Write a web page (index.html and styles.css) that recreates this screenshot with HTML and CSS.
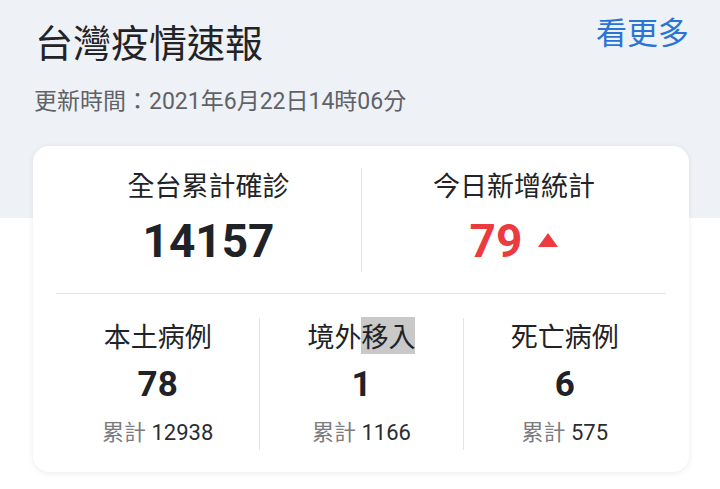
FILE: index.html
```html
<!DOCTYPE html>
<html lang="zh-Hant">
<head>
<meta charset="utf-8">
<title>台灣疫情速報</title>
<link rel="stylesheet" href="styles.css">
</head>
<body>
<div class="page">
  <header class="head">
    <h1 class="title cjk">台灣疫情速報</h1>
    <a class="more cjk" href="#">看更多</a>
  </header>
  <p class="updated">更新時間：2021年6月22日14時06分</p>
  <section class="card">
    <div class="top">
      <div class="cell">
        <div class="label cjk">全台累計確診</div>
        <div class="big">14157</div>
      </div>
      <div class="cell">
        <div class="label cjk">今日新增統計</div>
        <div class="big red">79<span class="tri"></span></div>
      </div>
    </div>
    <div class="rule"></div>
    <div class="bottom">
      <div class="col">
        <div class="label2 cjk">本土病例</div>
        <div class="mid">78</div>
        <div class="sum"><span class="sumlabel">累計</span> 12938</div>
      </div>
      <div class="col">
        <div class="label2 cjk">境外<span class="hl">移入</span></div>
        <div class="mid">1</div>
        <div class="sum"><span class="sumlabel">累計</span> 1166</div>
      </div>
      <div class="col">
        <div class="label2 cjk">死亡病例</div>
        <div class="mid">6</div>
        <div class="sum"><span class="sumlabel">累計</span> 575</div>
      </div>
    </div>
  </section>
</div>
</body>
</html>
```

FILE: styles.css
```css
html, body {
  margin: 0;
  padding: 0;
  background: #ffffff;
}
body {
  font-family: Roboto, "Noto Sans CJK TC", sans-serif;
  color: #202124;
}
.cjk {
  font-family: "Noto Sans CJK TC", sans-serif;
}
.page {
  width: 720px;
  height: 489px;
  overflow: hidden;
  background: linear-gradient(#eef1f5 0, #eef1f5 218px, #ffffff 218px);
}
.head {
  display: flex;
  justify-content: space-between;
  align-items: flex-start;
  padding: 15px 31px 0 35px;
}
.title {
  margin: 7px 0 0 0;
  font-size: 38px;
  line-height: 1;
  font-weight: 400;
  color: #222326;
}
.more {
  font-size: 31px;
  line-height: 1;
  color: #2a74d6;
  text-decoration: none;
}
.updated {
  margin: 30px 0 0 0;
  padding-left: 34px;
  font-size: 23px;
  line-height: 1;
  color: #5f6267;
}
.card {
  margin: 33px 31px 0 33px;
  background: #ffffff;
  border-radius: 16px;
  box-shadow: 0 1px 6px rgba(0, 0, 0, 0.08);
  padding: 22px 23px 22px;
}
.top {
  display: grid;
  grid-template-columns: 1fr 1fr;
}
.cell {
  display: flex;
  flex-direction: column;
  align-items: center;
  padding: 3px 0 8px;
}
.cell + .cell {
  border-left: 1px solid #e2e4e7;
}
.label {
  font-size: 27px;
  line-height: 1;
  color: #222326;
}
.big {
  margin-top: 20px;
  font-size: 46px;
  line-height: 1;
  font-weight: 700;
  color: #1f2227;
  display: flex;
  align-items: flex-end;
}
.red {
  color: #ec3a3e;
}
.tri {
  width: 0;
  height: 0;
  border-left: 10.5px solid transparent;
  border-right: 10.5px solid transparent;
  border-bottom: 14px solid #ec3a3e;
  margin: 0 0 17px 16px;
}
.rule {
  margin-top: 21px;
  height: 1px;
  background: #e2e4e7;
}
.bottom {
  margin-top: 24px;
  display: grid;
  grid-template-columns: 1fr 1fr 1fr;
}
.col {
  display: flex;
  flex-direction: column;
  align-items: center;
  padding-bottom: 6px;
}
.col + .col {
  border-left: 1px solid #e2e4e7;
}
.label2 {
  font-size: 27px;
  line-height: 37px;
  height: 37px;
  margin-top: -1px;
  color: #222326;
}
.hl {
  display: inline-block;
  height: 37px;
  background: #c9c9c9;
}
.mid {
  margin-top: 13px;
  font-size: 35px;
  line-height: 1;
  font-weight: 700;
  color: #1f2227;
}
.sum {
  margin-top: 20px;
  font-size: 22px;
  line-height: 1;
  color: #2a2c30;
}
.sumlabel {
  color: #7a7c80;
}
```
